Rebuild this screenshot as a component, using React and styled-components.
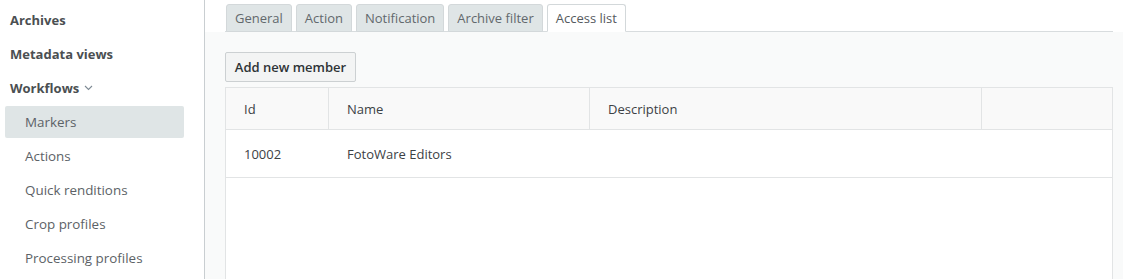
import React from "react";
import styled, { createGlobalStyle } from "styled-components";

const Global = createGlobalStyle`
  html, body { margin: 0; padding: 0; background: #fff; }
  body { font-family: "Open Sans", "Noto Sans", sans-serif; }
  * { box-sizing: border-box; }
`;

const Page = styled.div`
  display: flex;
  height: 279px;
  overflow: hidden;
`;

const Sidebar = styled.nav`
  width: 205px;
  flex: none;
  border-right: 1px solid #c9ced1;
  padding: 3px 20px 0 5px;
  display: flex;
  flex-direction: column;
`;

const TopItem = styled.div`
  height: 34px;
  display: flex;
  align-items: center;
  padding-left: 5px;
  font-size: 13px;
  font-weight: 700;
  color: #4b4f52;
  gap: 5px;
`;

const SubList = styled.div`
  margin-top: 1px;
  display: flex;
  flex-direction: column;
`;

const SubItem = styled.div`
  height: 32px;
  margin-bottom: 2px;
  display: flex;
  align-items: center;
  padding-left: 20px;
  font-size: 13.4px;
  color: #5c6266;
  border-radius: 2px;
  background: ${(p) => (p.$active ? "#dfe5e6" : "transparent")};
`;

const Main = styled.main`
  flex: 1;
  display: flex;
  flex-direction: column;
  min-width: 0;
`;

const TabBar = styled.div`
  display: flex;
  gap: 4px;
  margin: 0 10px 0 20px;
  padding: 4px 0 0 1px;
  border-bottom: 1px solid #d8dcde;
  background: #fff;
`;

const Tab = styled.div`
  height: 28px;
  margin-bottom: -1px;
  padding: 0 8px;
  display: flex;
  align-items: center;
  font-size: 13px;
  color: ${(p) => (p.$active ? "#555a5e" : "#62686c")};
  background: ${(p) => (p.$active ? "#fff" : "#dfe5e6")};
  border: 1px solid #d3d8da;
  border-bottom-color: ${(p) => (p.$active ? "#fff" : "#d3d8da")};
  border-radius: 3px 3px 0 0;
`;

const Panel = styled.section`
  flex: 1;
  background: #f9fafa;
  padding: 20px 10px 0 20px;
  display: flex;
  flex-direction: column;
`;

const Button = styled.button`
  align-self: flex-start;
  width: 131px;
  height: 30px;
  padding: 0;
  font-family: inherit;
  font-size: 13px;
  font-weight: 600;
  color: #2e3336;
  background: #f3f4f4;
  border: 1px solid #ccd0d2;
  border-radius: 2px;
`;

const Table = styled.div`
  margin-top: 5px;
  flex: 1;
  background: #fff;
  border: 1px solid #e2e4e5;
  border-bottom: none;
`;

const Row = styled.div`
  display: grid;
  grid-template-columns: 103px 261px 392px 1fr;
  height: ${(p) => (p.$head ? "42px" : "48px")};
  background: ${(p) => (p.$head ? "#f9f9f9" : "#fff")};
  border-bottom: 1px solid #e2e4e5;
`;

const Cell = styled.div`
  display: flex;
  align-items: center;
  padding-left: 18px;
  font-size: 13px;
  color: #3c4145;
  border-right: ${(p) => (p.$head && !p.$last ? "1px solid #e2e4e5" : "none")};
`;

const Chevron = () => (
  <svg width="9" height="6" viewBox="0 0 9 6" fill="none">
    <path d="M1 1l3.5 3.5L8 1" stroke="#7e8a94" strokeWidth="1.1" />
  </svg>
);

const subs = ["Markers", "Actions", "Quick renditions", "Crop profiles", "Processing profiles"];
const tabs = ["General", "Action", "Notification", "Archive filter", "Access list"];

export default function App() {
  return (
    <>
      <Global />
      <Page>
        <Sidebar>
          <TopItem>Archives</TopItem>
          <TopItem>Metadata views</TopItem>
          <TopItem>
            Workflows <Chevron />
          </TopItem>
          <SubList>
            {subs.map((s, i) => (
              <SubItem key={s} $active={i === 0}>
                {s}
              </SubItem>
            ))}
          </SubList>
        </Sidebar>
        <Main>
          <TabBar>
            {tabs.map((t) => (
              <Tab key={t} $active={t === "Access list"}>
                {t}
              </Tab>
            ))}
          </TabBar>
          <Panel>
            <Button>Add new member</Button>
            <Table>
              <Row $head>
                <Cell $head>Id</Cell>
                <Cell $head>Name</Cell>
                <Cell $head>Description</Cell>
                <Cell $head $last />
              </Row>
              <Row>
                <Cell>10002</Cell>
                <Cell>FotoWare Editors</Cell>
                <Cell />
                <Cell />
              </Row>
            </Table>
          </Panel>
        </Main>
      </Page>
    </>
  );
}
